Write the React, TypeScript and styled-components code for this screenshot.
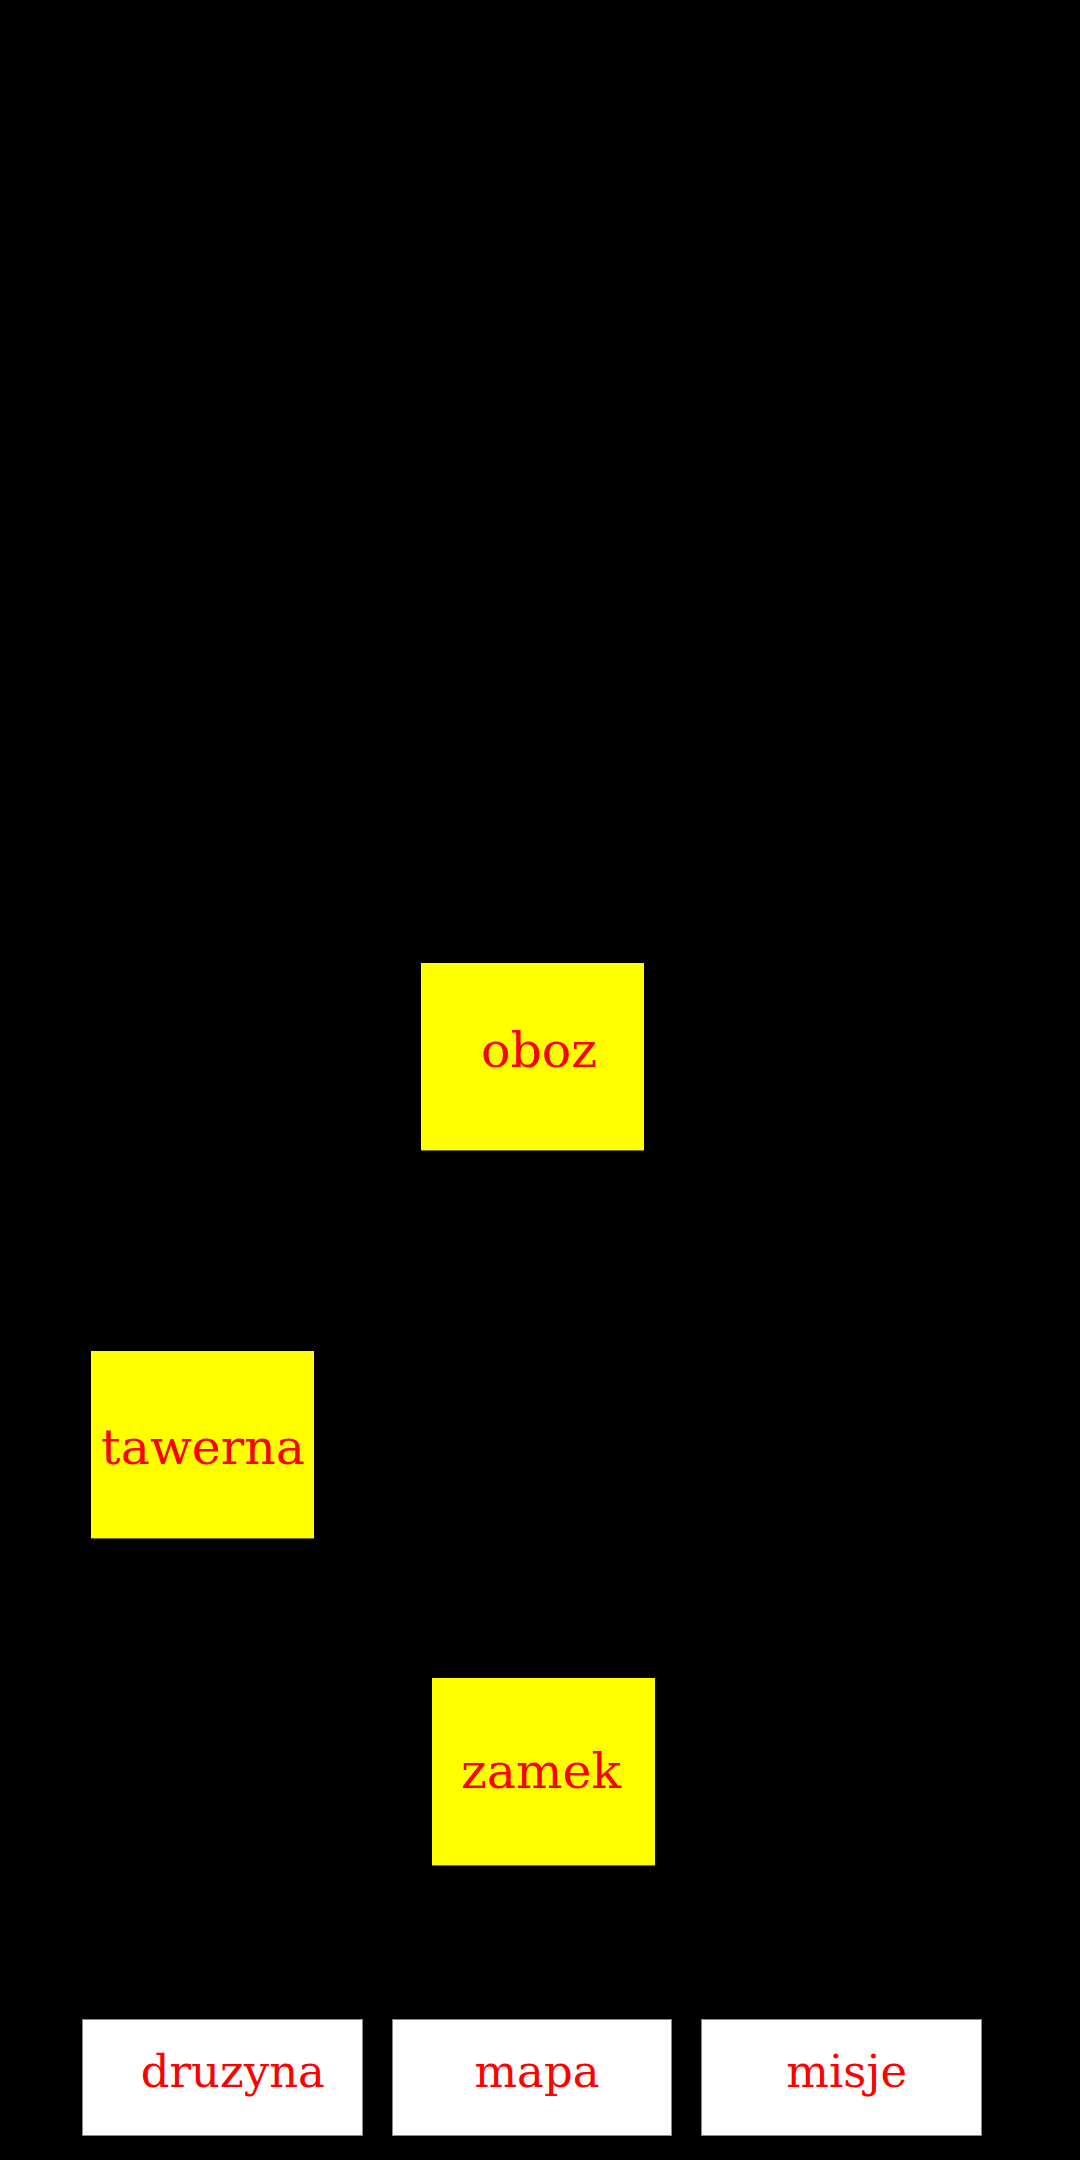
import React from "react";
import styled, { createGlobalStyle } from "styled-components";

const GlobalStyle = createGlobalStyle`
  html, body {
    margin: 0;
    padding: 0;
    background: #000;
  }
  body {
    font-family: "DejaVu Serif", serif;
  }
`;

interface Place {
  name: string;
  x: number;
  y: number;
  padLeft: number;
  baseline: number;
}

// locations on the map, placed by their coordinates
const places: Place[] = [
  { name: "oboz", x: 421, y: 963, padLeft: 60, baseline: 105 },
  { name: "tawerna", x: 91, y: 1351, padLeft: 10, baseline: 114 },
  { name: "zamek", x: 432, y: 1678, padLeft: 29, baseline: 111 },
];

const tabs = [
  { label: "druzyna", shift: 21 },
  { label: "mapa", shift: 10 },
  { label: "misje", shift: 10 },
];

const App: React.FC = () => {
  return (
    <>
      <GlobalStyle />
      <Screen>
        <MapArea>
          {places.map((p) => (
            <Location
              key={p.name}
              style={{ left: p.x, top: p.y }}
              $padLeft={p.padLeft}
              $baseline={p.baseline}
            >
              <span>{p.name}</span>
            </Location>
          ))}
        </MapArea>
        <NavBar>
          {tabs.map((t) => (
            <NavButton key={t.label} $shift={t.shift}>
              {t.label}
            </NavButton>
          ))}
        </NavBar>
      </Screen>
    </>
  );
};

export default App;

const Screen = styled.div`
  width: 1080px;
  height: 2160px;
  background: #000;
  display: flex;
  flex-direction: column;
`;

const MapArea = styled.div`
  position: relative;
  flex: 1;
`;

const Location = styled.div<{ $padLeft: number; $baseline: number }>`
  position: absolute;
  box-sizing: border-box;
  width: 223px;
  height: 188px;
  background: #ffff00;
  border-bottom: 1px solid #6b6b00;
  color: #ff0000;
  font-size: 49px;
  line-height: 1;
  white-space: nowrap;
  padding-left: ${(p) => p.$padLeft}px;
  padding-top: ${(p) => p.$baseline - 42}px;
`;

const NavBar = styled.div`
  display: flex;
  gap: 29px;
  padding: 0 98px 24px 82px;
`;

const NavButton = styled.div<{ $shift: number }>`
  box-sizing: border-box;
  width: 281px;
  height: 117px;
  background: #fff;
  border: 1px solid #888;
  color: #ff0000;
  font-size: 45px;
  line-height: 1;
  display: flex;
  align-items: flex-start;
  justify-content: center;
  padding-top: 29px;
  padding-left: ${(p) => p.$shift}px;
`;
